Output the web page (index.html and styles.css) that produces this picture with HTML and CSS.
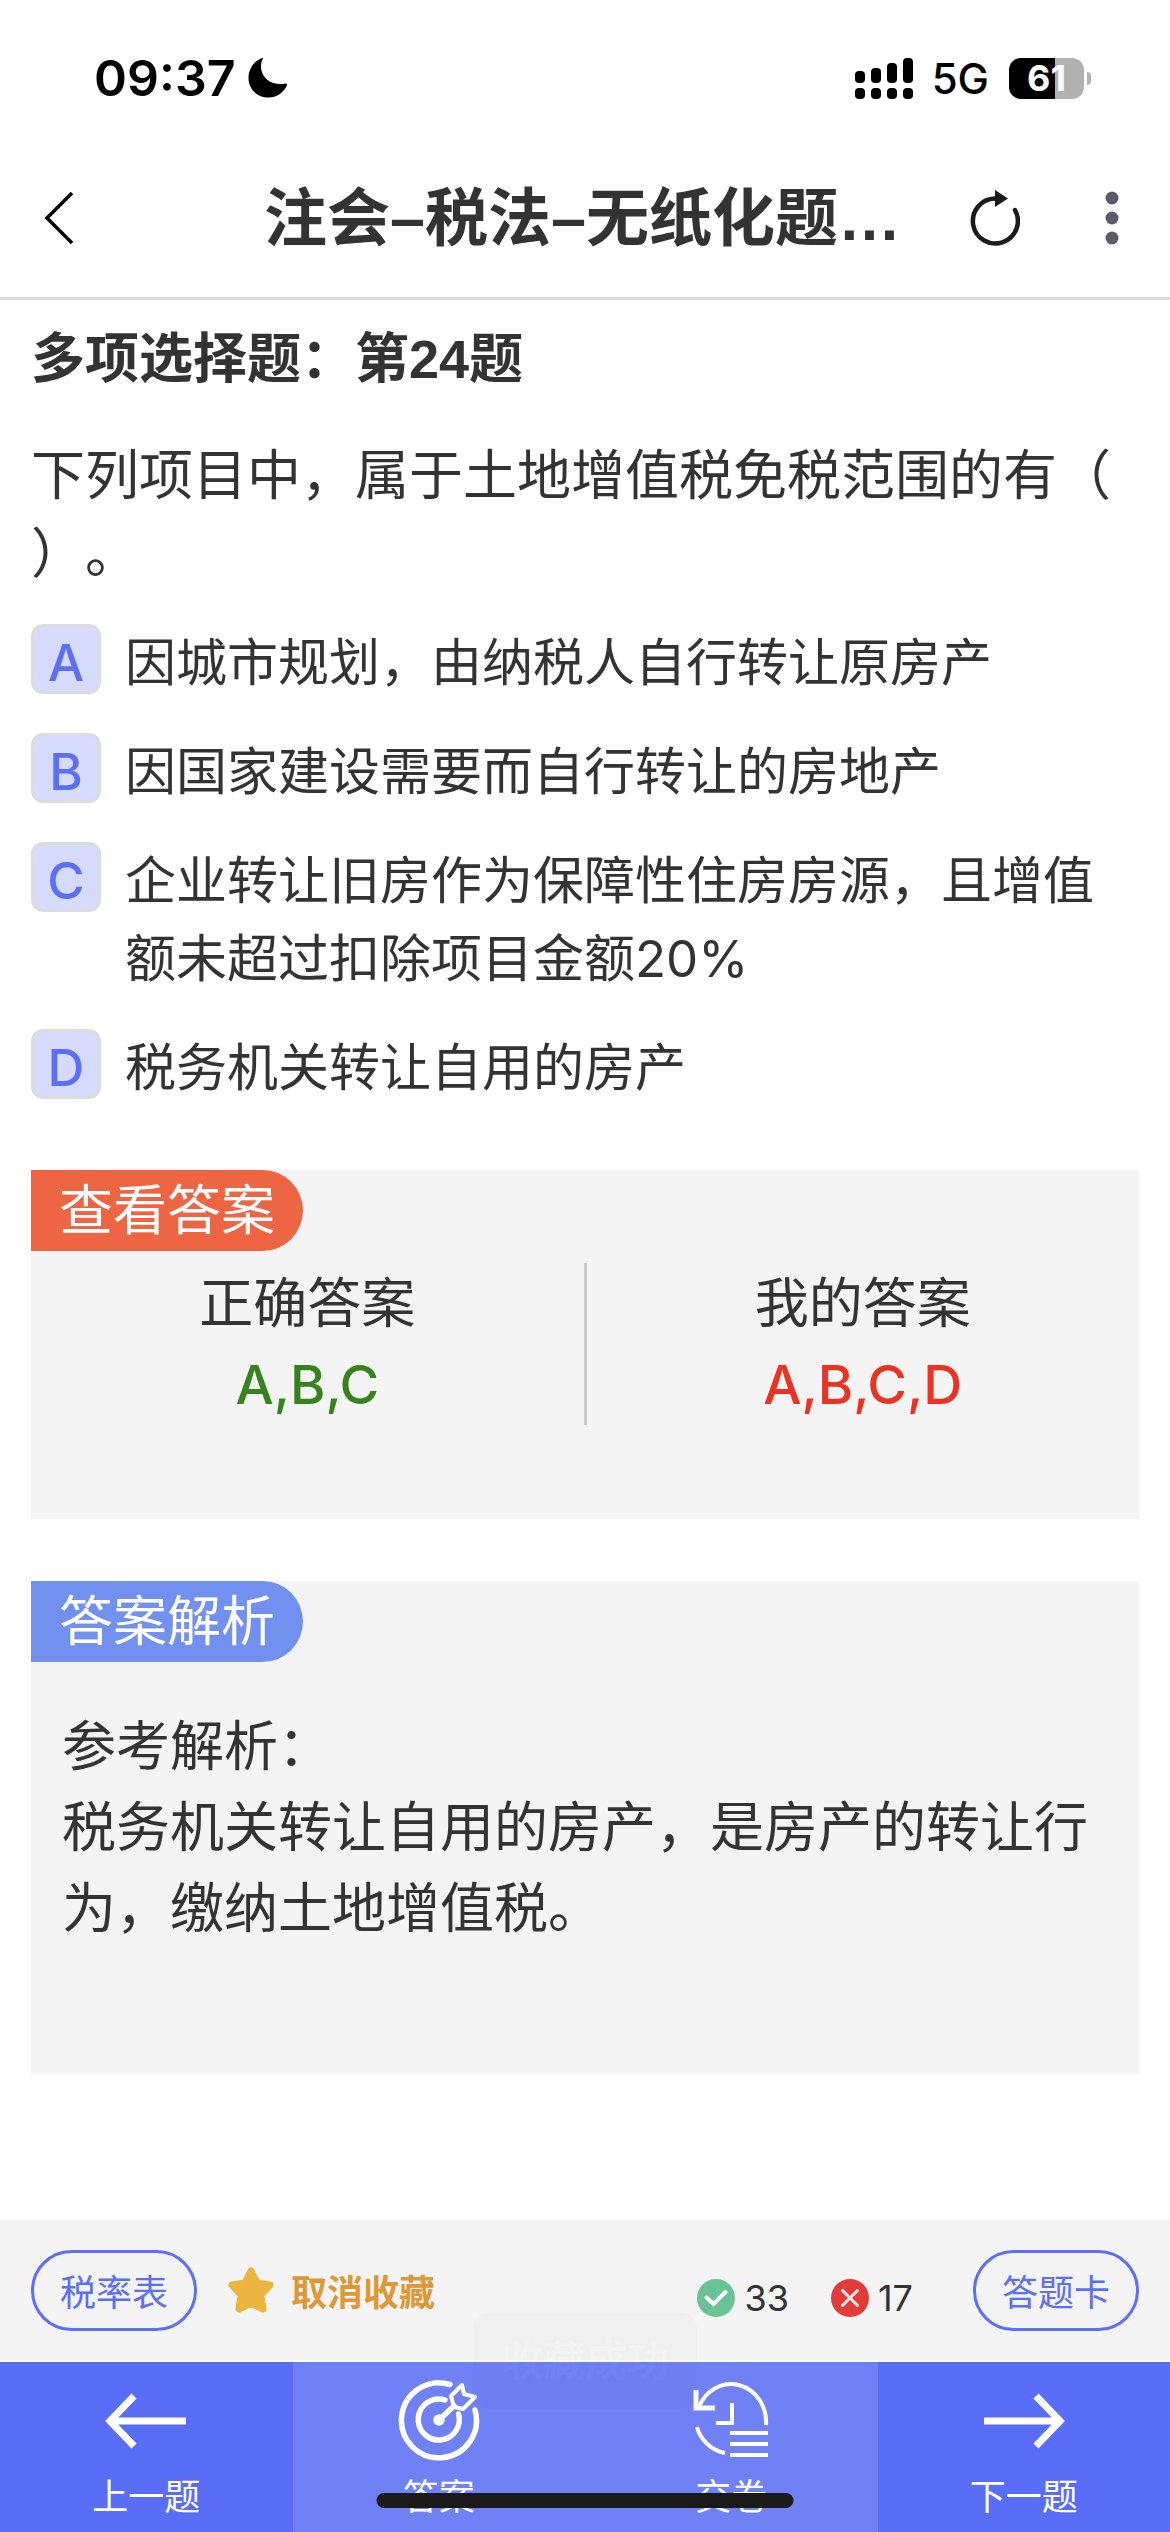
FILE: index.html
```html
<!DOCTYPE html>
<html lang="zh-CN">
<head>
  <meta charset="UTF-8">
  <meta name="viewport" content="width=device-width, initial-scale=1">
  <title>注会–税法–无纸化题库</title>
  <link rel="stylesheet" href="styles.css">
</head>
<body>
<div class="page">
  <div class="statusbar">
    <div class="clock">
      <span>09:37</span>
      <svg class="moon" viewBox="0 0 39 40"><path d="M15 0.5C13 4 12.500 8 13.500 12.500C15.500 21 24 28 38 25.500C39 25.200 39.300 26.500 38.800 27.500C35.500 35 28.500 39.500 20.500 39.500C9 39.500 0.500 31 0.500 20C0.500 11 6 3.200 13.500 0.300C14.500 0 15.300 0 15 0.500Z" fill="#000"/></svg>
    </div>
    <div class="signals">
      <svg class="cell" viewBox="0 0 58 41">
        <rect x="0" y="13" width="10" height="12" rx="4"/>
        <rect x="16" y="10" width="10" height="15" rx="4"/>
        <rect x="32" y="5" width="10" height="20" rx="4"/>
        <rect x="48" y="0" width="10" height="25" rx="4"/>
        <rect x="0" y="30" width="10" height="11" rx="4"/>
        <rect x="16" y="30" width="10" height="11" rx="4"/>
        <rect x="32" y="30" width="10" height="11" rx="4"/>
        <rect x="48" y="30" width="10" height="11" rx="4"/>
      </svg>
      <span class="network">5G</span>
      <div class="battery">61</div>
      <i class="battery-cap"></i>
    </div>
  </div>

  <header class="header">
    <button class="icon-btn" aria-label="返回">
      <svg class="back" viewBox="0 0 30 54"><path d="M28 2L3 27L28 52" fill="none" stroke="#000" stroke-width="3.500"/></svg>
    </button>
    <h1>注会–税法–无纸化题…</h1>
    <button class="icon-btn" aria-label="刷新">
      <svg class="refresh" viewBox="0 0 50 56">
        <path d="M25 8.500A22.500 22.500 0 1 0 45 20" fill="none" stroke="#1a1a1a" stroke-width="4.500" stroke-linecap="round"/>
        <path d="M25 0L38 8.500L25 17Z" fill="#1a1a1a"/>
      </svg>
    </button>
    <button class="icon-btn" aria-label="更多">
      <svg class="more" viewBox="0 0 14 54"><circle cx="7" cy="7" r="6.500"/><circle cx="7" cy="27" r="6.500"/><circle cx="7" cy="47" r="6.500"/></svg>
    </button>
  </header>

  <main class="content">
    <h2>多项选择题：第24题</h2>
    <p class="question">下列项目中，属于土地增值税免税范围的有（<br>）。</p>

    <ul class="options">
      <li><button class="letter">A</button><span>因城市规划，由纳税人自行转让原房产</span></li>
      <li><button class="letter">B</button><span>因国家建设需要而自行转让的房地产</span></li>
      <li><button class="letter">C</button><span>企业转让旧房作为保障性住房房源，且增值额未超过扣除项目金额20%</span></li>
      <li><button class="letter">D</button><span>税务机关转让自用的房产</span></li>
    </ul>

    <section class="panel">
      <h3 class="tag tag-red">查看答案</h3>
      <div class="answers">
        <div class="answer">
          <p>正确答案</p>
          <p class="right">A,B,C</p>
        </div>
        <div class="answer">
          <p>我的答案</p>
          <p class="wrong">A,B,C,D</p>
        </div>
      </div>
    </section>

    <section class="panel">
      <h3 class="tag tag-blue">答案解析</h3>
      <div class="analysis">
        <p>参考解析：</p>
        <p>税务机关转让自用的房产，是房产的转让行为，缴纳土地增值税。</p>
      </div>
    </section>
  </main>

  <footer class="footer">
    <div class="tools">
      <button class="pill">税率表</button>
      <button class="favorite">
        <svg class="star" viewBox="0 0 46 46"><path d="M23 4L29 16L42 18L33 28L35 42L23 36L11 42L13 28L4 18L17 16Z" fill="#ecb53f" stroke="#ecb53f" stroke-width="7" stroke-linejoin="round"/></svg>
        取消收藏
      </button>
      <div class="counts">
        <svg class="mark" viewBox="0 0 38 38"><circle cx="19" cy="19" r="19" fill="#6ac396"/><path d="M9.500 18.500L16.500 25L28.500 13" fill="none" stroke="#fff" stroke-width="4" stroke-linecap="round"/></svg>
        <span>33</span>
        <svg class="mark mark-wrong" viewBox="0 0 38 38"><circle cx="19" cy="19" r="19" fill="#e23c3a"/><path d="M11.500 11.500L26.500 26.500M26.500 11.500L11.500 26.500" stroke="#fde8e8" stroke-width="3" stroke-linecap="round"/></svg>
        <span>17</span>
      </div>
      <button class="pill">答题卡</button>
    </div>

    <nav class="nav">
      <a href="#prev" class="nav-item">
        <svg viewBox="0 0 84 84"><path d="M82 42H6M30 17L6 42L30 67" fill="none" stroke="#fff" stroke-width="7"/></svg>
        上一题
      </a>
      <a href="#answer" class="nav-item light">
        <svg viewBox="0 0 84 84" fill="none" stroke="#fff" stroke-width="5.500" stroke-linecap="round" stroke-linejoin="round">
          <path d="M53 5.500A37.500 37.500 0 1 0 78 31"/>
          <path d="M48 21A20.500 20.500 0 1 0 61.500 35"/>
          <path d="M42 41L57 27"/>
          <path d="M57 28L54 17L65 6L67 15L78 18L66 30Z" stroke-width="4"/>
          <circle cx="42" cy="41" r="3" fill="#fff"/>
        </svg>
        答案
      </a>
      <a href="#submit" class="nav-item light">
        <svg viewBox="0 0 84 84" fill="none" stroke="#fff" stroke-width="4">
          <path d="M77 46A35 38 0 0 0 10 28"/>
          <path d="M7 11V29H26" stroke-width="5"/>
          <path d="M8 48A36 36 0 0 0 36 74"/>
          <path d="M43 24V44H27"/>
          <path d="M41 54H79M41 65H79M41 76H79"/>
        </svg>
        交卷
      </a>
      <a href="#next" class="nav-item">
        <svg viewBox="0 0 84 84"><path d="M2 42H78M54 17L78 42L54 67" fill="none" stroke="#fff" stroke-width="7"/></svg>
        下一题
      </a>
    </nav>
    <div class="toast">收藏成功</div>
    <div class="home-bar"></div>
  </footer>
</div>
</body>
</html>
```
FILE: styles.css
```css
* {
  box-sizing: border-box;
  margin: 0;
  padding: 0;
}
body {
  font-family: Inter, "Noto Sans CJK SC", sans-serif;
  color: #333;
  background: #fff;
  text-spacing-trim: space-all;
}
button {
  font-family: inherit;
  background: none;
  border: none;
  cursor: pointer;
}
svg {
  display: block;
}
.page {
  display: flex;
  flex-direction: column;
  min-height: 100vh;
}

/* status bar */
.statusbar {
  display: flex;
  justify-content: space-between;
  align-items: center;
  height: 141px;
  padding: 15px 79px 0 94px;
  color: #000;
}
.clock {
  display: flex;
  align-items: center;
  gap: 12px;
  font-size: 50px;
  font-weight: 600;
}
.moon {
  width: 39px;
  height: 40px;
}
.signals {
  display: flex;
  align-items: center;
}
.cell {
  width: 58px;
  height: 41px;
}
.network {
  margin: 0 20px 0 19px;
  font-size: 42px;
  font-weight: 500;
}
.battery {
  width: 75px;
  height: 41px;
  border-radius: 12px;
  background: linear-gradient(to right, #000 62%, #b1b1b1 62%);
  color: #fff;
  font-size: 36px;
  font-weight: 700;
  line-height: 41px;
  text-align: center;
}
.battery-cap {
  width: 4px;
  height: 13px;
  margin-left: 3px;
  border-radius: 0 4px 4px 0;
  background: #b1b1b1;
}

/* header */
.header {
  display: flex;
  align-items: center;
  height: 159px;
  padding: 0 51px 3px 44px;
  border-bottom: 3px solid #dcdcdc;
}
.header h1 {
  flex: 1;
  padding-left: 190px;
  font-size: 63px;
  line-height: 80px;
  white-space: nowrap;
}
h1,
h2 {
  font-family: "Liberation Sans", "Noto Sans CJK SC", sans-serif;
  font-weight: 600;
}
.back {
  width: 30px;
  height: 54px;
}
.refresh {
  width: 50px;
  height: 56px;
  margin-right: 85px;
}
.more {
  width: 14px;
  height: 54px;
  fill: #5b5a68;
}

/* question */
.content {
  flex: 1;
  padding: 20px 31px 0;
}
h2 {
  font-size: 54px;
  line-height: 78px;
}
.question {
  margin: 39px 0 31px;
  font-size: 54px;
  line-height: 78px;
}
.options {
  list-style: none;
}
.options li {
  display: flex;
  align-items: flex-start;
  gap: 24px;
  margin-bottom: 31px;
  font-size: 51px;
  line-height: 78px;
}
.options span {
  flex: 1;
}
.letter {
  flex: none;
  width: 70px;
  height: 70px;
  border: 3px solid #dcdcdc;
  border-radius: 12px;
  background: #d6dafc;
  color: #5b6ff8;
  font-size: 51px;
  font-weight: 500;
  line-height: 72px;
}

/* answer panels */
.panel {
  margin-bottom: 62px;
  background: #f4f4f4;
  font-size: 54px;
  line-height: 81px;
}
.options + .panel {
  margin-top: 63px;
}
.tag {
  width: fit-content;
  padding: 0 28px;
  border-radius: 0 41px 41px 0;
  color: #fff;
  font-size: 54px;
  font-weight: 400;
}
.tag-red {
  background: #ee6544;
}
.tag-blue {
  background: #7190f0;
}
.answers {
  display: flex;
  padding: 12px 0 94px;
}
.answer {
  flex: 1;
  text-align: center;
}
.answer:first-child {
  border-right: 3px solid #ccc;
}
.right,
.wrong {
  font-weight: 500;
}
.right {
  color: #37821f;
}
.wrong {
  color: #ea3323;
}
.analysis {
  padding: 44px 31px 125px;
}

/* bottom bar */
.footer {
  position: relative;
}
.tools {
  display: flex;
  align-items: center;
  height: 140px;
  padding: 0 31px;
  background: #f4f4f4;
}
.pill {
  height: 81px;
  padding: 0 26px;
  border: 3px solid #5b6ff8;
  border-radius: 41px;
  color: #5b6ff8;
  font-size: 36px;
}
.favorite {
  display: flex;
  align-items: center;
  gap: 17px;
  margin-left: 31px;
  color: #dd9838;
  font-size: 36px;
  font-weight: 600;
}
.star {
  width: 46px;
  height: 46px;
}
.counts {
  display: flex;
  align-items: center;
  gap: 9px;
  margin: 15px 60px 0 auto;
  font-size: 36px;
}
.mark {
  width: 38px;
  height: 38px;
}
.mark-wrong {
  margin-left: 33px;
}
.nav {
  display: flex;
  margin-top: 2px;
}
.nav-item {
  flex: 1;
  display: flex;
  flex-direction: column;
  align-items: center;
  height: 170px;
  padding-top: 17px;
  background: #5a6df7;
  color: #fff;
  font-size: 36px;
  line-height: 68px;
  text-decoration: none;
}
.nav-item svg {
  width: 84px;
  height: 84px;
}
.nav-item.light {
  background: #7081f5;
}

/* fading toast and home indicator lie over the bar */
.toast {
  position: absolute;
  top: 93px;
  left: 50%;
  transform: translateX(-50%);
  padding: 0 28px;
  border-radius: 16px;
  background: #000;
  color: #fff;
  font-size: 42px;
  font-weight: 500;
  line-height: 96px;
  opacity: 0.01;
}
.home-bar {
  position: absolute;
  bottom: 24px;
  left: 50%;
  width: 417px;
  height: 15px;
  transform: translateX(-50%);
  border-radius: 8px;
  background: #1a1a1a;
}
```
